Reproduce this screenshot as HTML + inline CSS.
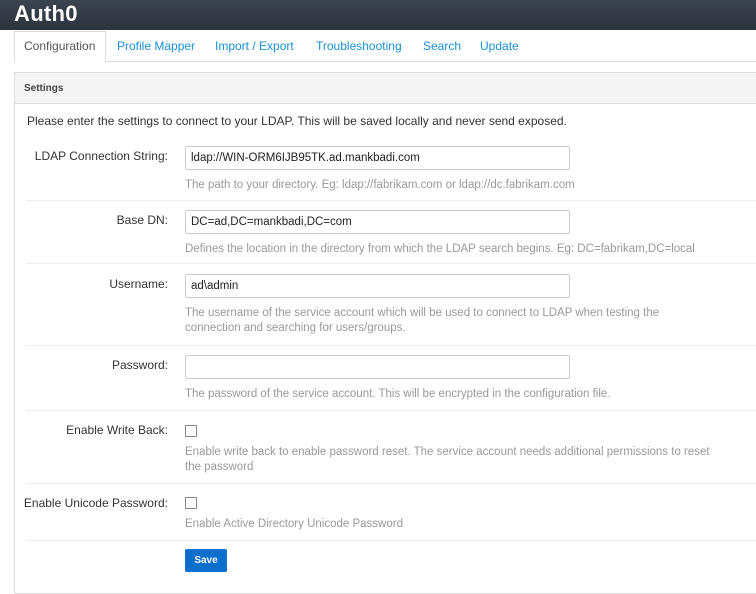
<!DOCTYPE html>
<html><head><style>
body{margin:0;width:756px;height:579px;overflow:hidden;background:#fff;font-family:"Liberation Sans",sans-serif;font-size:12px;color:#333;position:relative}
.a{position:absolute}
.hdr{left:0;top:0;width:756px;height:30px;background:linear-gradient(#3a4350,#2c333d)}
.logo{left:14px;top:1px;color:#fff;font-weight:bold;font-size:22px;letter-spacing:0.3px}
.tab{top:39px;color:#1a8fd6;font-size:12px}
.tabline{left:14px;top:61px;width:742px;border-top:1px solid #ddd}
.panel{left:14px;top:72px;width:750px;height:520px;border:1px solid #ddd;background:#fff}
.ph{left:15px;top:73px;width:741px;height:30px;background:#f5f5f5;border-bottom:1px solid #ddd}
.lbl{text-align:right;width:155px;left:13px}
.inp{left:185px;width:383px;height:22px;border:1px solid #ccc;border-radius:2px;background:#fff}
.it{left:191px;font-size:11.5px;color:#222}
.hint{left:185px;color:#999;font-size:11.5px;line-height:15px;width:530px}
.sep{left:26px;width:730px;border-top:1px solid #eee}
.cb{left:185px;width:10px;height:10px;border:1px solid #888;background:#fff}
</style></head><body>
<div class="a hdr"></div>
<div class="a logo">Auth0</div>
<div class="a tabline"></div>
<div class="a" style="left:14px;top:31px;width:90px;height:30px;border:1px solid #ddd;border-bottom:1px solid #fff;background:#fff"></div>
<div class="a tab" style="left:24px;color:#555">Configuration</div>
<div class="a tab" style="left:117px">Profile Mapper</div>
<div class="a tab" style="left:215px">Import / Export</div>
<div class="a tab" style="left:316px">Troubleshooting</div>
<div class="a tab" style="left:423px">Search</div>
<div class="a tab" style="left:480px">Update</div>
<div class="a panel"></div>
<div class="a ph"></div>
<div class="a" style="left:24px;top:83px;font-size:10px;font-weight:bold;color:#444">Settings</div>
<div class="a" style="left:27px;top:114px">Please enter the settings to connect to your LDAP. This will be saved locally and never send exposed.</div>

<div class="a lbl" style="top:149px">LDAP Connection String:</div>
<div class="a inp" style="top:146px"></div><div class="a it" style="top:152px">ldap://WIN-ORM6IJB95TK.ad.mankbadi.com</div>
<div class="a hint" style="top:178px">The path to your directory. Eg: ldap://fabrikam.com or ldap://dc.fabrikam.com</div>
<div class="a sep" style="top:200px"></div>

<div class="a lbl" style="top:213px">Base DN:</div>
<div class="a inp" style="top:210px"></div><div class="a it" style="top:216px">DC=ad,DC=mankbadi,DC=com</div>
<div class="a hint" style="top:242px;width:540px">Defines the location in the directory from which the LDAP search begins. Eg: DC=fabrikam,DC=local</div>
<div class="a sep" style="top:263px"></div>

<div class="a lbl" style="top:277px">Username:</div>
<div class="a inp" style="top:274px"></div><div class="a it" style="top:280px">ad\admin</div>
<div class="a hint" style="top:306px;width:500px">The username of the service account which will be used to connect to LDAP when testing the connection and searching for users/groups.</div>
<div class="a sep" style="top:345px"></div>

<div class="a lbl" style="top:358px">Password:</div>
<div class="a inp" style="top:355px"></div>
<div class="a hint" style="top:387px">The password of the service account. This will be encrypted in the configuration file.</div>
<div class="a sep" style="top:410px"></div>

<div class="a lbl" style="top:423px">Enable Write Back:</div>
<div class="a cb" style="top:425px"></div>
<div class="a hint" style="top:445px">Enable write back to enable password reset. The service account needs additional permissions to reset the password</div>
<div class="a sep" style="top:483px"></div>

<div class="a lbl" style="top:496px">Enable Unicode Password:</div>
<div class="a cb" style="top:497px"></div>
<div class="a hint" style="top:517px">Enable Active Directory Unicode Password</div>
<div class="a sep" style="top:540px"></div>

<div class="a" style="left:185px;top:549px;width:42px;height:23px;background:#0a6fcd;border-radius:2px;color:#fff;font-size:10px;font-weight:bold;text-align:center;line-height:23px">Save</div>
</body></html>
